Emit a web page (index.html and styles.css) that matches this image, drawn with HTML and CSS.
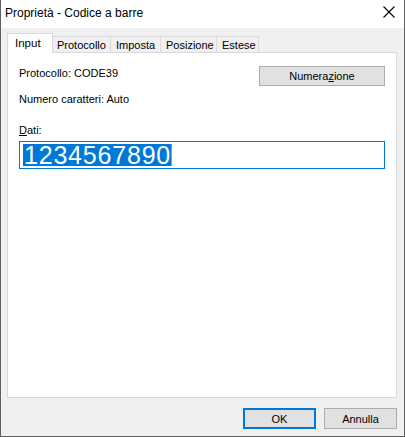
FILE: index.html
```html
<!DOCTYPE html>
<html lang="it">
<head>
    <meta charset="UTF-8">
    <title>Proprietà - Codice a barre</title>
    <link rel="stylesheet" href="styles.css">
</head>
<body>
    <div class="window">
        <div class="titlebar">
            <span class="title">Proprietà - Codice a barre</span>
            <svg class="close" width="12" height="12" viewBox="0 0 12 12">
                <path d="M0.5 0.5 L11.5 11.5 M11.5 0.5 L0.5 11.5" stroke="#000" stroke-width="1.1" fill="none"/>
            </svg>
        </div>
        <div class="body">
            <div class="tabs">
                <div class="tab active">Input</div>
                <div class="tab t-proto">Protocollo</div>
                <div class="tab t-imp">Imposta</div>
                <div class="tab t-pos">Posizione</div>
                <div class="tab t-est">Estese</div>
            </div>
            <div class="panel">
                <div class="top-row">
                    <div class="info">
                        <div class="line">Protocollo: CODE39</div>
                        <div class="line second">Numero caratteri: Auto</div>
                    </div>
                    <button class="btn num">Numera<u>z</u>ione</button>
                </div>
                <div class="label"><u>D</u>ati:</div>
                <div class="field"><span class="sel">1234567890</span><span class="caret"></span></div>
            </div>
            <div class="footer">
                <button class="btn ok">OK</button>
                <button class="btn">Annulla</button>
            </div>
        </div>
    </div>
</body>
</html>
```

FILE: styles.css
```css
body {
    margin: 0;
    font-family: "Liberation Sans", Arial, sans-serif;
    font-size: 11px;
    color: #000;
}

.window {
    width: 405px;
    height: 437px;
    box-sizing: border-box;
    border: 1px solid #5f5f5f;
    border-top: none;
    background-color: #f0f0f0;
    display: flex;
    flex-direction: column;
}

.titlebar {
    height: 28px;
    background-color: #fff;
    display: flex;
    align-items: center;
    justify-content: space-between;
    padding: 0 8px 0 4px;
    flex-shrink: 0;
}

.title {
    font-size: 12px;
    margin-top: -3px;
}

.close {
    margin-top: -4px;
    margin-right: 1px;
}

.body {
    flex: 1;
    display: flex;
    flex-direction: column;
    padding: 5px 7px 0 6px;
}

.tabs {
    display: flex;
    align-items: flex-end;
    height: 19px;
    position: relative;
    z-index: 1;
}

.tab {
    height: 16px;
    line-height: 16px;
    padding: 0 0 0 5px;
    border: 1px solid #d9d9d9;
    border-bottom: none;
    border-left: none;
    box-sizing: border-box;
    background-color: #f0f0f0;
    font-size: 11px;
}

.t-proto { width: 58px; padding-left: 4px; }
.t-imp { width: 50px; }
.t-pos { width: 56px; }
.t-est { width: 42px; }

.tab.active {
    width: 46px;
    height: 20px;
    line-height: 18px;
    padding: 0 0 0 7px;
    border-left: 1px solid #d9d9d9;
    background-color: #fff;
    margin-bottom: -1px;
    font-size: 11.5px;
}

.panel {
    height: 346px;
    box-sizing: border-box;
    background-color: #fff;
    border: 1px solid #d9d9d9;
    padding: 14px 11px 0 11px;
}

.top-row {
    display: flex;
    justify-content: space-between;
}

.info .line {
    height: 13px;
    line-height: 13px;
}

.info .second {
    margin-top: 13px;
}

.btn {
    font-family: "Liberation Sans", Arial, sans-serif;
    font-size: 11px;
    background-color: #e1e1e1;
    border: 1px solid #adadad;
    color: #000;
    padding: 0;
    width: 73px;
    height: 21px;
}

.btn u {
    text-decoration: underline;
}

.btn.num {
    width: 126px;
    height: 20px;
    margin-top: -1px;
}

.label {
    margin-top: 18px;
    height: 13px;
    line-height: 13px;
}

.field {
    margin-top: 4px;
    height: 28px;
    box-sizing: border-box;
    border: 1px solid #0078d7;
    padding: 2px 3px;
    display: flex;
    align-items: stretch;
}

.sel {
    background-color: #0078d7;
    color: #fff;
    font-size: 25px;
    line-height: 22px;
    letter-spacing: 0.8px;
    padding-left: 1px;
}

.caret {
    width: 1px;
    background-color: #f08a24;
}

.footer {
    display: flex;
    justify-content: flex-end;
    gap: 8px;
    padding-top: 10px;
}

.btn.ok {
    border: 2px solid #0078d7;
}
```
